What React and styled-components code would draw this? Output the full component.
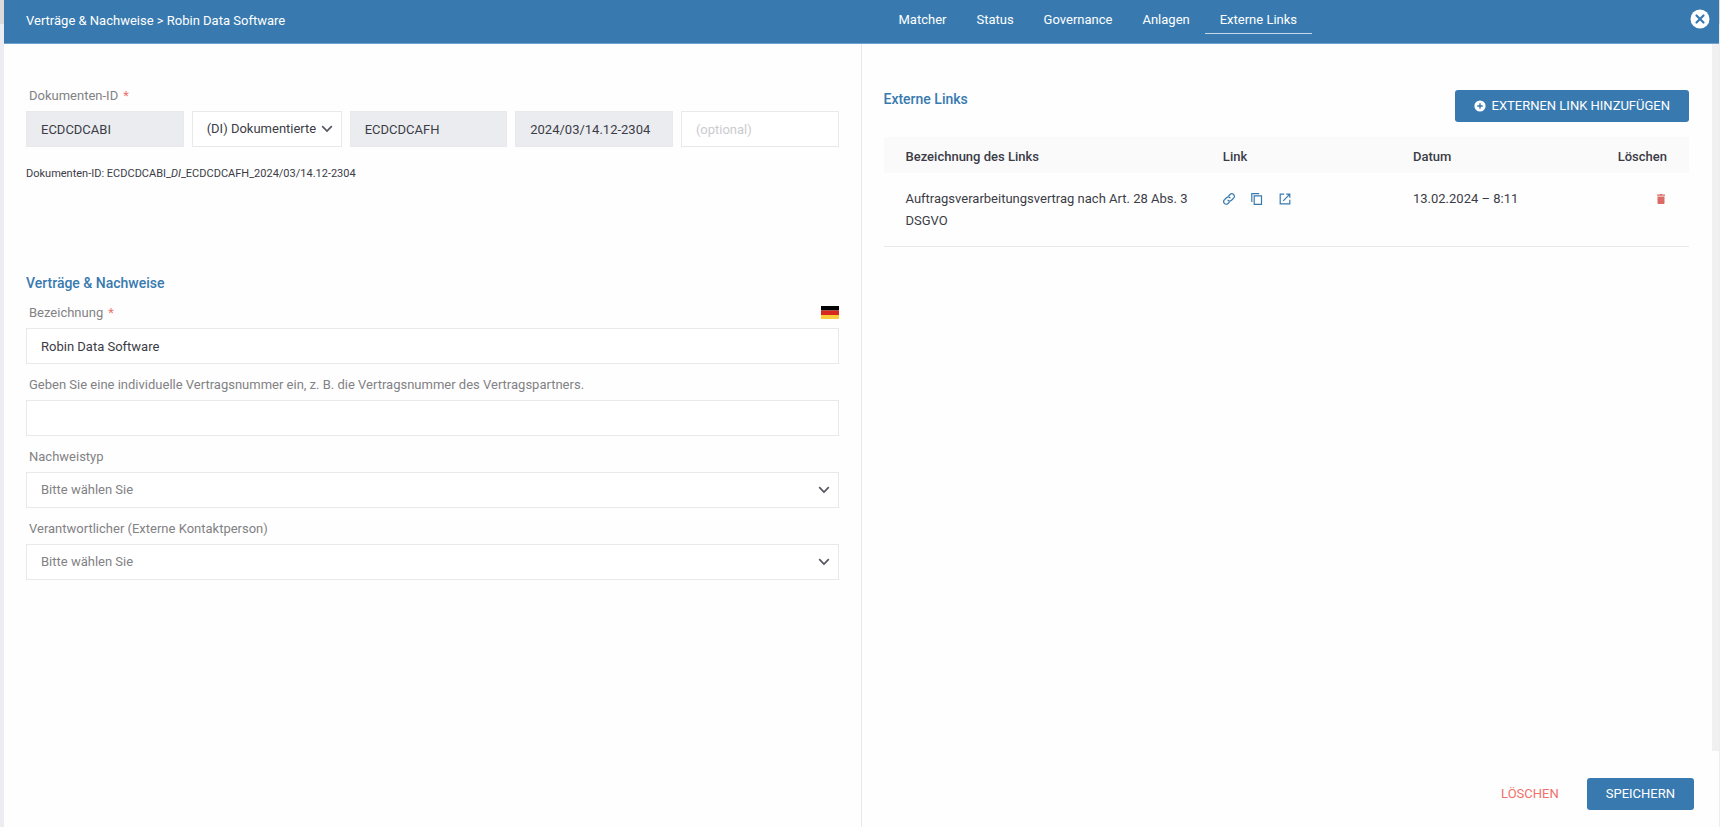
import React, { useState } from 'react';
import styled, { createGlobalStyle, css } from 'styled-components';

const blue = '#387aaf';
const text = '#3b3c46';
const muted = '#828285';
const line = '#e9e9eb';
const red = '#f0716b';

const GlobalStyle = createGlobalStyle`
  *, *::before, *::after { box-sizing: border-box; }
  body {
    margin: 0;
    background: linear-gradient(#dadadc 24px, #ecedf3 24px);
    color: ${text};
    font-family: Roboto, "Liberation Sans", sans-serif;
    font-size: 13px;
    line-height: 22px;
  }
  button, input, select { font: inherit; color: inherit; }
`

const Dialog = styled.div`
  display: flex;
  flex-direction: column;
  min-height: 100vh;
  margin: 0 1px 0 4px;
  background: #fefefe;
`
const Header = styled.header`
  display: grid;
  grid-template-columns: 1fr 1fr;
  height: 44px;
  background: ${blue};
  border-bottom: 1px solid #6fa3cd;
  color: #fff;
`
const Breadcrumb = styled.div`
  padding: 10px 22px;
`
const HeaderRight = styled.div`
  display: flex;
  align-items: flex-start;
  justify-content: space-between;
  padding: 9px 9px 0 22px;
`
const Tabs = styled.nav`
  display: flex;
`
const Tab = styled.a`
  padding: 0 15px 2px;
  border-bottom: 1px solid ${({ $active }) => ($active ? '#c3d8e8' : 'transparent')};
  color: #fff;
  text-decoration: none;
`
const Close = styled.button`
  display: flex;
  padding: 0;
  border: 0;
  background: none;
  cursor: pointer;
`

const Main = styled.main`
  display: grid;
  grid-template-columns: calc(50% - 1px) 1fr;
  flex: 1;
`
const LeftPane = styled.section`
  padding: 31px 22px;
`
const RightPane = styled.section`
  display: flex;
  flex-direction: column;
  border-left: 1px solid ${line};
`
const Scroll = styled.div`
  flex: 1;
  padding: 46px 23px 20px 22px;
  border-right: 7px solid #f0f0f1;
`
const Footer = styled.footer`
  display: flex;
  justify-content: flex-end;
  gap: 12px;
  padding: 27px 25px 17px;
`

const Title = styled.h2`
  margin: 0;
  color: ${blue};
  font-size: 14px;
  font-weight: 500;
  line-height: 18px;
`
const IdFields = styled.div`
  display: grid;
  grid-template-columns: 1fr 150px 1fr 1fr 1fr;
  gap: 8px;
`
const IdPreview = styled.p`
  margin: 16px 0 89px;
  font-size: 11px;
`
const LabelRow = styled.div`
  display: flex;
  align-items: center;
  justify-content: space-between;
  height: 36px;
  padding: 5px 0 0 3px;
`
const Label = styled.label`
  color: ${muted};
`
const Required = styled.span`
  margin-left: 5px;
  color: ${red};
`
const box = css`
  width: 100%;
  height: 36px;
  padding: 0 14px;
  border: 1px solid ${line};
  border-radius: 0;
  background: #fff;
  outline: none;
`
const Input = styled.input`
  ${box}
  &:disabled {
    background: #ebecf0;
    color: ${text};
  }
  &::placeholder { color: #cbcbcf; }
`
const SelectWrap = styled.div`
  display: grid;
  align-items: center;

  > * { grid-area: 1 / 1; }
  > svg {
    justify-self: end;
    margin-right: 8px;
    pointer-events: none;
  }
`
const Select = styled.select`
  ${box}
  padding-right: 22px;
  appearance: none;
  color: ${({ $empty }) => ($empty ? muted : text)};
`

const Toolbar = styled.div`
  display: flex;
  align-items: flex-start;
  justify-content: space-between;
  margin-bottom: 15px;
`
const Button = styled.button`
  display: flex;
  align-items: center;
  gap: 6px;
  height: 32px;
  padding: 0 19px;
  border: 0;
  border-radius: 3px;
  background: ${blue};
  color: #fff;
  text-transform: uppercase;
  cursor: pointer;
`
const DeleteButton = styled(Button)`
  padding: 0 16px;
  background: none;
  color: ${red};
`

const Table = styled.table`
  width: 100%;
  table-layout: fixed;
  border-collapse: collapse;
`
const Th = styled.th`
  width: ${({ $width }) => $width};
  padding: 9px 10px 5px 22px;
  background: #fafafb;
  font-weight: 500;
  text-align: ${({ $right }) => ($right ? 'right' : 'left')};

  &:last-child { padding-right: 22px; }
`
const Td = styled.td`
  padding: 15px 10px 14px 22px;
  border-bottom: 1px solid ${line};
  vertical-align: top;

  &:last-child { padding-right: 22px; }
`
const Actions = styled.div`
  display: flex;
  align-items: center;
  justify-content: ${({ $right }) => ($right ? 'flex-end' : 'flex-start')};
  gap: 16px;
  height: 22px;
`
const IconButton = styled.button`
  display: flex;
  padding: 0;
  border: 0;
  background: none;
  color: ${({ $danger }) => ($danger ? '#dc6a66' : blue)};
  cursor: pointer;
`

const CloseIcon = () => (
  <svg width="20" height="20" viewBox="0 0 20 20">
    <circle cx="10" cy="10" r="9.5" fill="#fff" />
    <path d="M6.500 6.500l7 7M13.500 6.500l-7 7" stroke={blue} strokeWidth="2.2" strokeLinecap="round" />
  </svg>
);

const PlusIcon = () => (
  <svg width="12" height="12" viewBox="0 0 12 12">
    <circle cx="6" cy="6" r="5.6" fill="#fff" />
    <path d="M6 3.2v5.6M3.2 6h5.6" stroke={blue} strokeWidth="1.4" />
  </svg>
);

const Chevron = () => (
  <svg width="14" height="14" viewBox="0 0 14 14" fill="none">
    <path d="M2.2 4.2L7 9l4.800-4.800" stroke="#55565e" strokeWidth="1.7" />
  </svg>
);

const Flag = () => (
  <svg width="18" height="13" viewBox="0 0 18 13" role="img" aria-label="Deutsch">
    <path d="M0 0h18v4.500H0z" fill="#000" />
    <path d="M0 4.500h18V9H0z" fill="#d8271c" />
    <path d="M0 9h18v4H0z" fill="#f9cc3c" />
  </svg>
);

const LinkIcon = () => (
  <svg width="12" height="12" viewBox="0 0 24 24" fill="none" stroke="currentColor" strokeWidth="2.4" strokeLinecap="round">
    <path d="M10 14.500a5 5 0 0 0 7 0l4-4a5 5 0 0 0-7-7.500l-2.500 2.500" />
    <path d="M14 9.500a5 5 0 0 0-7 0l-4 4a5 5 0 0 0 7 7.500l2.500-2.500" />
  </svg>
);

const CopyIcon = () => (
  <svg width="12" height="12" viewBox="0 0 12 12" fill="none" stroke="currentColor" strokeWidth="1.2">
    <path d="M.8 9V.7h7.400" />
    <path d="M3.200 2.900h7.300v8.500H3.200z" />
  </svg>
);

const OpenIcon = () => (
  <svg width="12" height="12" viewBox="0 0 12 12" fill="none" stroke="currentColor" strokeWidth="1.2">
    <path d="M5.200 1.200h-4v9.600h9.600v-4" />
    <path d="M7.200 1.200h3.600v3.600M10.600 1.400L4.200 7.800" />
  </svg>
);

const TrashIcon = () => (
  <svg width="12" height="12" viewBox="0 0 12 12" fill="currentColor">
    <path d="M2 1.600h2.500L5 1h2l.5.600H10v1.200H2zM2.500 3.400h7V10a1 1 0 0 1-1 1h-5a1 1 0 0 1-1-1z" />
  </svg>
);

const tabs = ['Matcher', 'Status', 'Governance', 'Anlagen', 'Externe Links'];

const links = [
  { name: 'Auftragsverarbeitungsvertrag nach Art. 28 Abs. 3 DSGVO', date: '13.02.2024 – 8:11' },
];

const Field = ({ id, label, required, extra, children }) => (
  <div>
    <LabelRow>
      <Label htmlFor={id}>
        {label}
        {required && <Required>*</Required>}
      </Label>
      {extra}
    </LabelRow>
    {children}
  </div>
);

const Dropdown = ({ options, empty, ...rest }) => (
  <SelectWrap>
    <Select $empty={empty} {...rest}>
      {options.map(o => <option key={o}>{o}</option>)}
    </Select>
    <Chevron />
  </SelectWrap>
);

const LinkTable = () => (
  <Table>
    <thead>
      <tr>
        <Th $width="39.4%">Bezeichnung des Links</Th>
        <Th $width="23.6%">Link</Th>
        <Th>Datum</Th>
        <Th $right>Löschen</Th>
      </tr>
    </thead>
    <tbody>
      {links.map(link => (
        <tr key={link.name}>
          <Td>{link.name}</Td>
          <Td>
            <Actions>
              <IconButton aria-label="Link"><LinkIcon /></IconButton>
              <IconButton aria-label="Kopieren"><CopyIcon /></IconButton>
              <IconButton aria-label="Öffnen"><OpenIcon /></IconButton>
            </Actions>
          </Td>
          <Td>{link.date}</Td>
          <Td>
            <Actions $right>
              <IconButton $danger aria-label="Löschen"><TrashIcon /></IconButton>
            </Actions>
          </Td>
        </tr>
      ))}
    </tbody>
  </Table>
);

export default function App() {
  const [active, setActive] = useState('Externe Links');
  const [name, setName] = useState('Robin Data Software');

  return (
    <>
      <GlobalStyle />
      <Dialog>
        <Header>
          <Breadcrumb>Verträge &amp; Nachweise &gt; Robin Data Software</Breadcrumb>
          <HeaderRight>
            <Tabs>
              {tabs.map(tab => (
                <Tab key={tab} href="#" $active={tab === active} onClick={() => setActive(tab)}>{tab}</Tab>
              ))}
            </Tabs>
            <Close aria-label="Schließen"><CloseIcon /></Close>
          </HeaderRight>
        </Header>
        <Main>
          <LeftPane>
            <Field id="doc-id" label="Dokumenten-ID" required>
              <IdFields>
                <Input id="doc-id" defaultValue="ECDCDCABI" disabled />
                <Dropdown aria-label="Dokumentart" options={['(DI) Dokumentierte Information']} />
                <Input aria-label="Kürzel" defaultValue="ECDCDCAFH" disabled />
                <Input aria-label="Version" defaultValue="2024/03/14.12-2304" disabled />
                <Input aria-label="Zusatz" placeholder="(optional)" />
              </IdFields>
            </Field>
            <IdPreview>Dokumenten-ID: ECDCDCABI_<i>DI</i>_ECDCDCAFH_2024/03/14.12-2304</IdPreview>
            <Title>Verträge &amp; Nachweise</Title>
            <Field id="name" label="Bezeichnung" required extra={<Flag />}>
              <Input id="name" value={name} onChange={e => setName(e.target.value)} />
            </Field>
            <Field
              id="number"
              label="Geben Sie eine individuelle Vertragsnummer ein, z. B. die Vertragsnummer des Vertragspartners."
            >
              <Input id="number" />
            </Field>
            <Field id="type" label="Nachweistyp">
              <Dropdown id="type" empty options={['Bitte wählen Sie']} />
            </Field>
            <Field id="contact" label="Verantwortlicher (Externe Kontaktperson)">
              <Dropdown id="contact" empty options={['Bitte wählen Sie']} />
            </Field>
          </LeftPane>
          <RightPane>
            <Scroll>
              <Toolbar>
                <Title>Externe Links</Title>
                <Button><PlusIcon />Externen Link hinzufügen</Button>
              </Toolbar>
              <LinkTable />
            </Scroll>
            <Footer>
              <DeleteButton>Löschen</DeleteButton>
              <Button>Speichern</Button>
            </Footer>
          </RightPane>
        </Main>
      </Dialog>
    </>
  );
}
